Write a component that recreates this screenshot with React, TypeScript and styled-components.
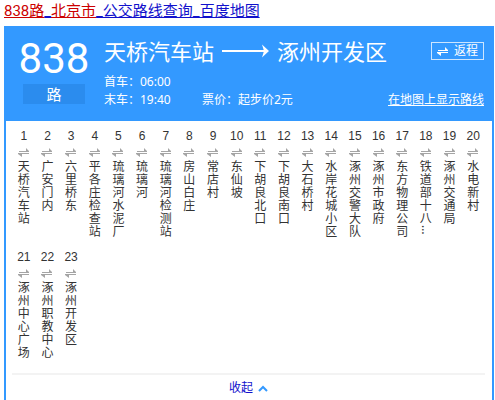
import React from 'react';
import styled, { createGlobalStyle } from 'styled-components';

const GlobalStyle = createGlobalStyle`
  * { box-sizing: border-box; }
  html, body { margin: 0; padding: 0; background: #fff; }
  body { font-family: "Noto Sans", "Noto Sans CJK SC", sans-serif; font-size: 12px; color: #333; }
`;

const Page = styled.main`
  display: flex;
  flex-direction: column;
  min-height: 100vh;
  padding: 0 1px 0 4px;
`;

const ResultTitle = styled.h1`
  margin: 0;
  height: 26px;
  font: 400 15px/22px Roboto, "Noto Sans CJK SC", sans-serif;
  white-space: nowrap;
`;

const TitleLink = styled.a`
  color: #1111cc;
  text-decoration: underline;
`;

const Keyword = styled.em`
  color: #cc0000;
  font-style: normal;
  text-decoration: underline;
`;

const Card = styled.section`
  flex: 1;
  border: solid #3399ff;
  border-width: 0 2px;
`;

const Header = styled.header`
  display: flex;
  height: 95px;
  padding: 9px 8px 0 12px;
  background: #3399ff;
  color: #fff;
`;

const Badge = styled.div`
  width: 72px;
  flex: none;
  text-align: center;
`;

const RouteNumber = styled.div`
  font-family: Roboto, sans-serif;
  font-size: 42px;
  line-height: 48px;
`;

const RouteUnit = styled.div`
  height: 20px;
  margin: 1px 5px 0;
  background: #2b8cee;
  font-size: 15px;
  line-height: 20px;
`;

const Info = styled.div`
  flex: 1;
  padding-left: 14px;
  white-space: nowrap;
`;

const Direction = styled.h2`
  display: flex;
  align-items: center;
  gap: 8px;
  margin: 0;
  font-size: 22px;
  font-weight: 400;
  line-height: 32px;
`;

const Schedule = styled.div`
  display: grid;
  grid-template-columns: 98px auto;
  justify-content: start;
  margin-top: 6px;
  line-height: 18px;
`;

const Actions = styled.div`
  display: flex;
  flex-direction: column;
  align-items: flex-end;
  justify-content: space-between;
  padding: 7px 0 12px;
`;

const ReturnButton = styled.button`
  display: flex;
  align-items: center;
  gap: 5px;
  height: 18px;
  padding: 0 5px;
  border: 1px solid #cce5ff;
  background: transparent;
  color: #fff;
  font: inherit;
  line-height: 18px;
`;

const MapLink = styled.a`
  color: #fff;
  line-height: 18px;
  white-space: nowrap;
`;

const Stops = styled.ol`
  display: grid;
  grid-template-columns: repeat(20, 1fr);
  grid-auto-rows: 121px;
  margin: 0;
  padding: 7px 7px 0 6px;
  list-style: none;
`;

const Stop = styled.li`
  display: flex;
  flex-direction: column;
  align-items: center;
`;

const StopNumber = styled.span`
  font-family: "Liberation Sans", sans-serif;
  line-height: 16px;
  margin-bottom: 4px;
`;

const StopName = styled.span`
  width: 12px;
  margin-top: 3px;
  line-height: 13px;
  word-break: break-all;
`;

const Ellipsis = styled.span`
  display: block;
  width: 12px;
  height: 13px;
  line-height: 12px;
  writing-mode: vertical-rl;
`;

const Footer = styled.footer`
  display: flex;
  justify-content: center;
  margin: 3px 7px 0 6px;
  padding-top: 4px;
  border-top: 2px solid #f3f3f3;
`;

const Collapse = styled.button`
  display: flex;
  align-items: center;
  gap: 5px;
  padding: 0;
  border: 0;
  background: none;
  color: #1111cc;
  font: inherit;
  line-height: 18px;
`;

const stops = [
  '天桥汽车站', '广安门内', '六里桥东', '平各庄检查站', '琉璃河水泥厂',
  '琉璃河', '琉璃河检测站', '房山白庄', '常店村', '东仙坡',
  '下胡良北口', '下胡良南口', '大石桥村', '水岸花城小区', '涿州交警大队',
  '涿州市政府', '东方物理公司', '铁道部十八…', '涿州交通局', '水电新村',
  '涿州中心广场', '涿州职教中心', '涿州开发区',
];

function SwapIcon({ color }: { color: string }) {
  return (
    <svg width="12" height="9" viewBox="0 0 12 9" fill={color} aria-hidden="true">
      <path d="M1 3H8V0L11 3V4H1ZM0 5H11V6H4V9L0 6Z" />
    </svg>
  );
}

export default function App() {
  return (
    <>
      <GlobalStyle />
      <Page>
        <ResultTitle>
          <TitleLink href="#"><Keyword>838路</Keyword>_<Keyword>北京市</Keyword>_公交路线查询_百度地图</TitleLink>
        </ResultTitle>
        <Card>
          <Header>
            <Badge>
              <RouteNumber>838</RouteNumber>
              <RouteUnit>路</RouteUnit>
            </Badge>
            <Info>
              <Direction>
                天桥汽车站
                <svg width="47" height="14" viewBox="0 0 47 14" aria-label="至">
                  <path d="M0 7H44" stroke="#fff" strokeWidth="2" />
                  <path d="M40 0.5L47 7L40 13.5L42 7Z" fill="#fff" />
                </svg>
                涿州开发区
              </Direction>
              <Schedule>
                <span>首车：06:00</span><span />
                <span>末车：19:40</span><span>票价：起步价2元</span>
              </Schedule>
            </Info>
            <Actions>
              <ReturnButton type="button"><SwapIcon color="#fff" />返程</ReturnButton>
              <MapLink href="#">在地图上显示路线</MapLink>
            </Actions>
          </Header>
          <Stops>
            {stops.map((name, i) => (
              <Stop key={name}>
                <StopNumber>{i + 1}</StopNumber>
                <SwapIcon color="#a5a5a5" />
                <StopName>
                  {name.replace('…', '')}
                  {name.endsWith('…') && <Ellipsis>…</Ellipsis>}
                </StopName>
              </Stop>
            ))}
          </Stops>
          <Footer>
            <Collapse type="button">
              收起
              <svg width="10" height="7" viewBox="0 0 10 7" fill="none" stroke="#3399ff" strokeWidth="2" aria-hidden="true">
                <path d="M1 6L5 2L9 6" />
              </svg>
            </Collapse>
          </Footer>
        </Card>
      </Page>
    </>
  );
}
